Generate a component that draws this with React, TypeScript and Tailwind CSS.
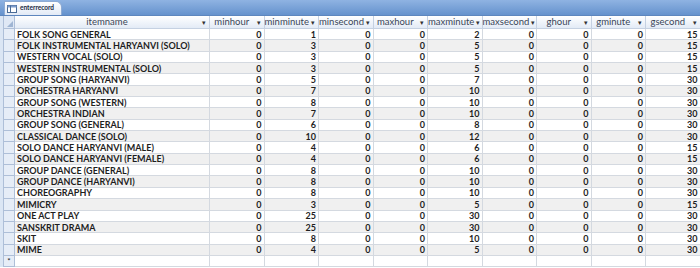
import React from "react";

const cols = ["minhour", "minminute", "minsecond", "maxhour", "maxminute", "maxsecond", "ghour", "gminute", "gsecond"];

const rows: [string, number[]][] = [
  ["FOLK SONG GENERAL", [0, 1, 0, 0, 2, 0, 0, 0, 15]],
  ["FOLK INSTRUMENTAL HARYANVI (SOLO)", [0, 3, 0, 0, 5, 0, 0, 0, 15]],
  ["WESTERN VOCAL (SOLO)", [0, 3, 0, 0, 5, 0, 0, 0, 15]],
  ["WESTERN INSTRUMENTAL (SOLO)", [0, 3, 0, 0, 5, 0, 0, 0, 15]],
  ["GROUP SONG (HARYANVI)", [0, 5, 0, 0, 7, 0, 0, 0, 30]],
  ["ORCHESTRA HARYANVI", [0, 7, 0, 0, 10, 0, 0, 0, 30]],
  ["GROUP SONG (WESTERN)", [0, 8, 0, 0, 10, 0, 0, 0, 30]],
  ["ORCHESTRA INDIAN", [0, 7, 0, 0, 10, 0, 0, 0, 30]],
  ["GROUP SONG (GENERAL)", [0, 6, 0, 0, 8, 0, 0, 0, 30]],
  ["CLASSICAL DANCE (SOLO)", [0, 10, 0, 0, 12, 0, 0, 0, 30]],
  ["SOLO DANCE HARYANVI (MALE)", [0, 4, 0, 0, 6, 0, 0, 0, 15]],
  ["SOLO DANCE HARYANVI (FEMALE)", [0, 4, 0, 0, 6, 0, 0, 0, 15]],
  ["GROUP DANCE (GENERAL)", [0, 8, 0, 0, 10, 0, 0, 0, 30]],
  ["GROUP DANCE (HARYANVI)", [0, 8, 0, 0, 10, 0, 0, 0, 30]],
  ["CHOREOGRAPHY", [0, 8, 0, 0, 10, 0, 0, 0, 30]],
  ["MIMICRY", [0, 3, 0, 0, 5, 0, 0, 0, 15]],
  ["ONE ACT PLAY", [0, 25, 0, 0, 30, 0, 0, 0, 30]],
  ["SANSKRIT DRAMA", [0, 25, 0, 0, 30, 0, 0, 0, 30]],
  ["SKIT", [0, 8, 0, 0, 10, 0, 0, 0, 30]],
  ["MIME", [0, 4, 0, 0, 5, 0, 0, 0, 30]],
];

const gridCols = "grid grid-cols-[11px_195px_repeat(9,54.5px)]";

function HeaderCell({ label }: { label: string }) {
  return (
    <div className="flex items-center border-r border-b border-[#c5d1e2] bg-gradient-to-b from-[#ffffff] to-[#e3ebf6] text-[#3a4658] text-[9.5px] leading-none">
      <span className="flex-1 text-center">{label}</span>
      <span className="w-[10px] text-[7px] text-[#333] text-center">▾</span>
    </div>
  );
}

export default function App() {
  return (
    <div className="w-[700px] h-[268px] overflow-hidden bg-white font-['Lato',sans-serif] text-[9px]">
      {/* tab strip */}
      <div className="h-[16px] flex items-end pl-[4px] bg-gradient-to-b from-[#8fb3e2] to-[#6592cd] border-b border-[#5d86be]">
        <div className="h-[14px] w-[58px] flex items-center gap-[3px] pl-[2px] rounded-tr-[6px] bg-gradient-to-b from-[#ffffff] to-[#e2eaf6] border border-b-0 border-[#8eabd3]">
          <svg width="10" height="8" viewBox="0 0 10 8" className="shrink-0">
            <rect x="0.5" y="0.5" width="9" height="7" fill="#fff" stroke="#4a6b96" />
            <rect x="0.5" y="0.5" width="9" height="2" fill="#7d9ccc" />
            <line x1="3.5" y1="0.5" x2="3.5" y2="7.5" stroke="#4a6b96" />
          </svg>
          <span className="font-bold text-[6.5px] text-[#1b2a40] leading-none whitespace-nowrap">enterrecord</span>
        </div>
      </div>

      <div className="flex">
        <div className="w-[4px] shrink-0 bg-[#dbe6f4] border-r border-[#aebfd8]" />
        <div className="flex-1">
          {/* header */}
          <div className={`${gridCols} h-[13px]`}>
            <div className="relative border-r border-b border-[#aebfd8] bg-[#dfe8f5]">
              <svg className="absolute right-[1px] bottom-[1px]" width="6" height="6" viewBox="0 0 6 6">
                <polygon points="6,0 6,6 0,6" fill="#9fb5d3" />
              </svg>
            </div>
            <HeaderCell label="itemname" />
            {cols.map((c) => (
              <HeaderCell key={c} label={c} />
            ))}
          </div>

          {/* data rows */}
          {rows.map(([name, vals], i) => (
            <div
              key={name}
              className={`${gridCols} h-[11.35px] font-bold text-[#1e1e1e] ${i % 2 === 1 ? "bg-[#f0f0f0]" : "bg-white"}`}
            >
              <div className="border-r border-b border-[#aebfd8] bg-[#e6edf7]" />
              <div className="flex items-center pl-[2px] border-r border-b border-[#d4d9e0] leading-none">{name}</div>
              {vals.map((v, j) => (
                <div key={j} className="flex items-center justify-end pr-[2px] border-r border-b border-[#d4d9e0] leading-none">
                  {v}
                </div>
              ))}
            </div>
          ))}

          {/* new record row */}
          <div className={`${gridCols} h-[11.35px] bg-white`}>
            <div className="flex items-center justify-center border-r border-b border-[#aebfd8] bg-[#e6edf7] text-[8px] leading-none text-[#222]">
              *
            </div>
            <div className="border-r border-b border-[#d4d9e0]" />
            {cols.map((c) => (
              <div key={c} className="border-r border-b border-[#d4d9e0]" />
            ))}
          </div>
        </div>
      </div>
    </div>
  );
}
